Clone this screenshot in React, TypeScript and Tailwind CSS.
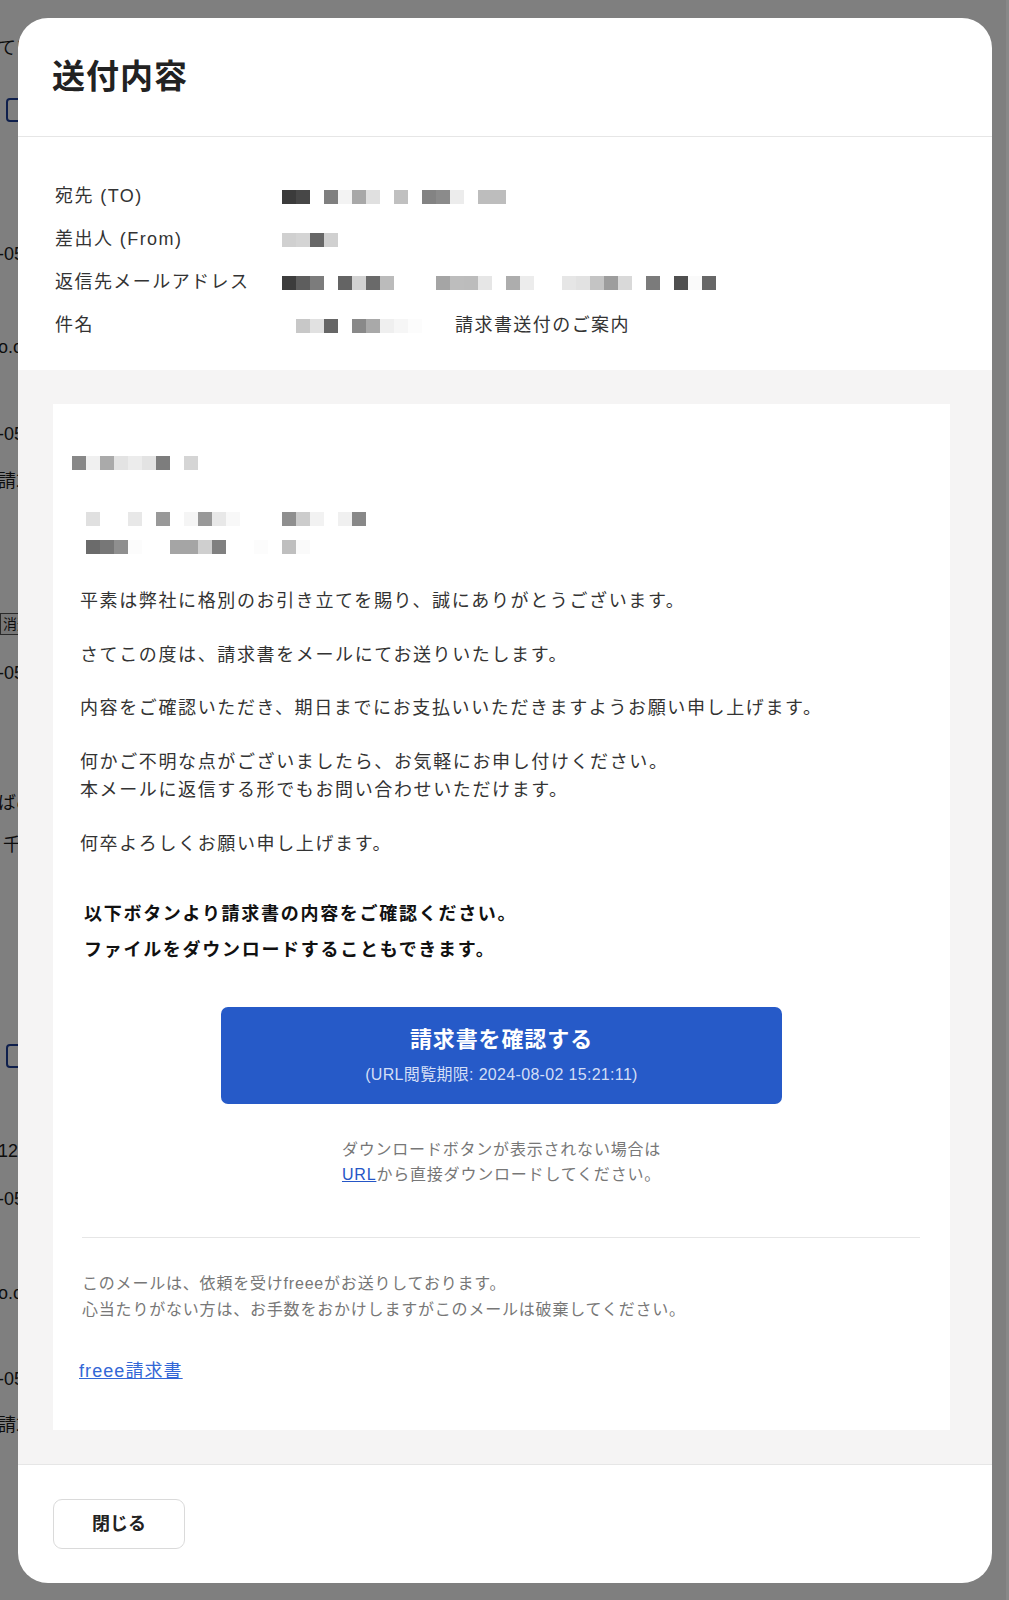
const FONT = "font-['Liberation_Sans','Noto_Sans_CJK_JP',sans-serif]";

// censored values are drawn as mosaic squares
function Mosaic({ cells, className = "" }: { cells: string[]; className?: string }) {
  return (
    <div className={"flex h-[14px] shrink-0 " + className}>
      {cells.map((c, i) => (
        <span key={i} className="block h-[14px] w-[14px]" style={{ background: c || "transparent" }} />
      ))}
    </div>
  );
}

const TO = ["#3b3b3b", "#474747", "", "#7f7f7f", "#f3f3f3", "#a8a8a8", "#e0e0e0", "", "#c0c0c0", "", "#838383", "#8b8b8b", "#ececec", "", "#bdbdbd", "#bdbdbd"];
const FROM = ["#d0d0d0", "#d4d4d4", "#676767", "#d0d0d0"];
const REPLY = ["#3d3d3d", "#5e5e5e", "#7c7c7c", "", "#646464", "#d2d2d2", "#6a6a6a", "#bbbbbb", "", "", "", "#a5a5a5", "#bdbdbd", "#bcbcbc", "#e6e6e6", "", "#adadad", "#ececec", "", "", "#e6e6e6", "#e2e2e2", "#c4c4c4", "#9d9d9d", "#d9d9d9", "", "#7b7b7b", "", "#4f4f4f", "#fafafa", "#676767"];
const SUBJ = ["", "#c8c8c8", "#e1e1e1", "#666666", "", "#898989", "#a9a9a9", "#efefef", "#f6f6f6", "#fcfcfc"];
const NAME = ["#888888", "#f0f0f0", "#aaaaaa", "#e3e3e3", "#ececec", "#e3e3e3", "#7d7d7d", "", "#d5d5d5"];
const ADDR1 = ["#e0e0e0", "", "", "#e8e8e8", "", "#999999", "", "#f5f5f5", "#999999", "#e8e8e8", "#f8f8f8", "", "", "", "#8f8f8f", "#cccccc", "#f2f2f2", "", "#f0f0f0", "#888888"];
const ADDR2 = ["#6b6b6b", "#777777", "#8f8f8f", "#fcfcfc", "", "", "#a5a5a5", "#a5a5a5", "#cfcfcf", "#808080", "", "", "#fcfcfc", "", "#bfbfbf", "#fafafa"];

function InfoRow({ label, children }: { label: string; children: React.ReactNode }) {
  return (
    <div className="grid h-[43px] grid-cols-[227px_1fr] items-center">
      <span className="text-[18px] tracking-[0.08em] text-[#333]">{label}</span>
      <div className="flex items-center">{children}</div>
    </div>
  );
}

// the page behind the overlay; only a thin slice of it shows at the left
// each entry: gap above (px) and what sits in the 24px line
const BACK: { gap: number; t: string; kind?: "box" | "tag" }[] = [
  { gap: 36, t: "てい" },
  { gap: 38, t: "", kind: "box" },
  { gap: 120, t: "-05-31" },
  { gap: 69, t: "o.co.jp" },
  { gap: 63, t: "-05-31" },
  { gap: 23, t: "請求" },
  { gap: 119, t: "消込", kind: "tag" },
  { gap: 25, t: "-05-31" },
  { gap: 106, t: "ばめ" },
  { gap: 18, t: " 千" },
  { gap: 187, t: "", kind: "box" },
  { gap: 71, t: "12" },
  { gap: 24, t: "-05-31" },
  { gap: 70, t: "o.co.jp" },
  { gap: 62, t: "-05-31" },
  { gap: 22, t: "請求" },
];

function BackPage() {
  return (
    <div className="flex h-[1600px] w-[60px] flex-col bg-white text-[18px] leading-[24px] text-[#1a1a1a]">
      {BACK.map((r, i) => (
        <div key={i} className="flex h-[24px] shrink-0 items-center" style={{ marginTop: r.gap }}>
          {r.kind === "box" ? (
            <span className="ml-[6px] block h-[24px] w-[24px] rounded-[4px] border-2 border-[#1d3f99]" />
          ) : r.kind === "tag" ? (
            <span className="ml-[0px] border border-[#555] bg-[#eee] px-[2px] text-[14px] leading-[20px]">{r.t}</span>
          ) : (
            <span className="ml-[-2px] whitespace-pre">{r.t}</span>
          )}
        </div>
      ))}
    </div>
  );
}

export default function App() {
  return (
    <div className={"relative h-[1600px] w-[1009px] overflow-hidden bg-white " + FONT}>
      <BackPage />
      <div className="absolute inset-0 bg-black/50" />
      <div className="absolute right-0 top-0 h-[1600px] w-[3px] bg-[#888]" />

      <div className="absolute left-[18px] top-[18px] flex h-[1565px] w-[974px] flex-col overflow-hidden rounded-[30px] bg-white">
        <header className="flex h-[119px] shrink-0 items-center border-b border-[#e6e6e6] px-[34px]">
          <h1 className="text-[33px] font-bold tracking-[0.03em] text-[#222]">送付内容</h1>
        </header>

        <section className="h-[233px] shrink-0 px-[37px] pt-[38px]">
          <InfoRow label="宛先 (TO)">
            <Mosaic cells={TO} />
          </InfoRow>
          <InfoRow label="差出人 (From)">
            <Mosaic cells={FROM} />
          </InfoRow>
          <InfoRow label="返信先メールアドレス">
            <Mosaic cells={REPLY} />
          </InfoRow>
          <InfoRow label="件名">
            <Mosaic cells={SUBJ} />
            <span className="ml-[33px] text-[18px] tracking-[0.08em] text-[#333]">請求書送付のご案内</span>
          </InfoRow>
        </section>

        <div className="h-[1094px] shrink-0 bg-[#f5f4f4] pb-[34px] pl-[35px] pr-[42px] pt-[34px]">
          <div className="flex h-[1026px] flex-col bg-white px-[27px] pt-[52px]">
            <Mosaic cells={NAME} className="ml-[-8px]" />
            <Mosaic cells={ADDR1} className="ml-[6px] mt-[42px]" />
            <Mosaic cells={ADDR2} className="ml-[6px] mt-[14px]" />

            <div className="mt-[33px] text-[18px] leading-[28.5px] tracking-[0.09em] text-[#333]">
              <p>平素は弊社に格別のお引き立てを賜り、誠にありがとうございます。</p>
              <p className="mt-[25px]">さてこの度は、請求書をメールにてお送りいたします。</p>
              <p className="mt-[25px]">内容をご確認いただき、期日までにお支払いいただきますようお願い申し上げます。</p>
              <p className="mt-[25px]">
                何かご不明な点がございましたら、お気軽にお申し付けください。
                <br />
                本メールに返信する形でもお問い合わせいただけます。
              </p>
              <p className="mt-[25px]">何卒よろしくお願い申し上げます。</p>
            </div>

            <div className="mt-[38px] pl-[4px] text-[18px] font-bold leading-[36px] tracking-[0.095em] text-[#111]">
              <p>以下ボタンより請求書の内容をご確認ください。</p>
              <p>ファイルをダウンロードすることもできます。</p>
            </div>

            <button className="mx-auto mt-[39px] flex h-[97px] w-[561px] shrink-0 flex-col items-center rounded-[7px] bg-[#265ac8] pt-[20px]">
              <span className="text-[22px] font-bold leading-[26px] tracking-[0.04em] text-white">請求書を確認する</span>
              <span className="mt-[12px] text-[16px] leading-[20px] tracking-[0.02em] text-[#d3def6]">(URL閲覧期限: 2024-08-02 15:21:11)</span>
            </button>

            <div className="mt-[33px] text-center text-[16px] leading-[25px] tracking-[0.05em] text-[#777]">
              <p>ダウンロードボタンが表示されない場合は</p>
              <p>
                <a className="text-[#2556c6] underline">URL</a>から直接ダウンロードしてください。
              </p>
            </div>

            <hr className="ml-[2px] mr-[3px] mt-[50px] border-t border-[#e6e6e6]" />

            <div className="mt-[33px] pl-[2px] text-[16px] leading-[26px] tracking-[0.05em] text-[#777]">
              <p>このメールは、依頼を受けfreeeがお送りしております。</p>
              <p>心当たりがない方は、お手数をおかけしますがこのメールは破棄してください。</p>
            </div>

            <a className="ml-[-1px] mt-[34px] self-start text-[18px] leading-[28px] tracking-[0.06em] text-[#3367d6] underline">
              freee請求書
            </a>
          </div>
        </div>

        <footer className="flex flex-1 items-start border-t border-[#e6e6e6] px-[35px] pt-[34px]">
          <button className="h-[50px] w-[132px] rounded-[9px] border border-[#dadada] bg-white text-[18px] font-bold text-[#222]">
            閉じる
          </button>
        </footer>
      </div>
    </div>
  );
}
